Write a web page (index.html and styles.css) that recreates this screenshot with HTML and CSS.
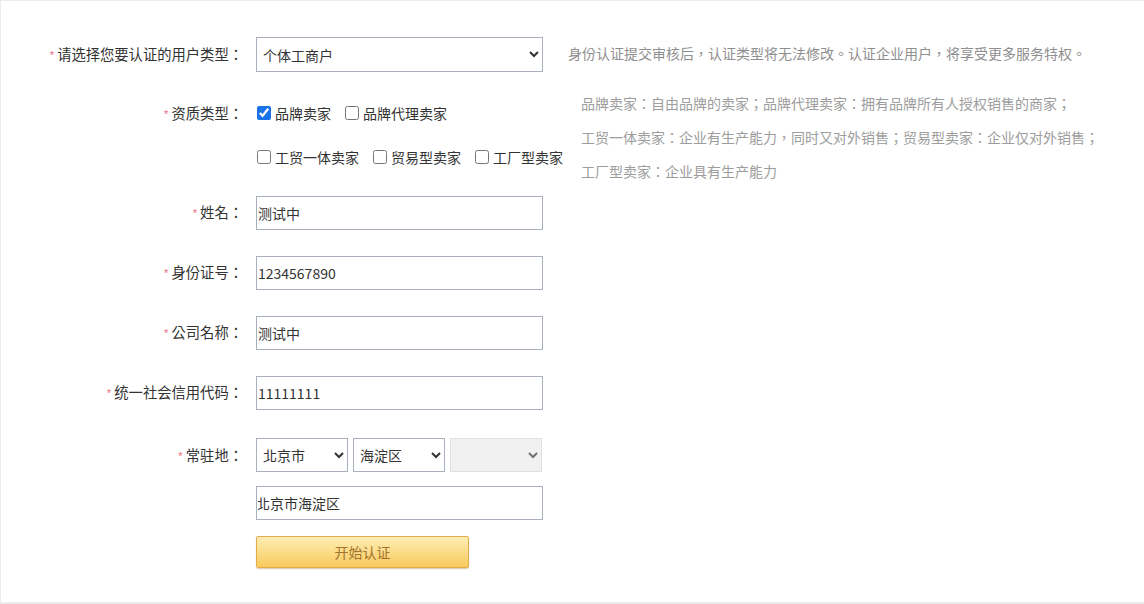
FILE: index.html
```html
<!DOCTYPE html>
<html>
<head>
<meta charset="utf-8">
<title>身份认证</title>
<link rel="stylesheet" href="styles.css">
</head>
<body>
<div class="page">
  <form class="form">
    <div class="row row-type">
      <label class="label"><span class="req">*</span> 请选择您要认证的用户类型：</label>
      <select class="select select-wide">
        <option>个体工商户</option>
        <option>企业</option>
      </select>
      <p class="note">身份认证提交审核后，认证类型将无法修改。认证企业用户，将享受更多服务特权。</p>
    </div>

    <div class="row row-quals">
      <label class="label label-quals"><span class="req">*</span> 资质类型：</label>
      <div class="checks">
        <div class="check-line">
          <label class="check"><input type="checkbox" checked>品牌卖家</label>
          <label class="check"><input type="checkbox">品牌代理卖家</label>
        </div>
        <div class="check-line">
          <label class="check"><input type="checkbox">工贸一体卖家</label>
          <label class="check"><input type="checkbox">贸易型卖家</label>
          <label class="check"><input type="checkbox">工厂型卖家</label>
        </div>
      </div>
      <div class="hints">
        <p>品牌卖家：自由品牌的卖家；品牌代理卖家：拥有品牌所有人授权销售的商家；</p>
        <p>工贸一体卖家：企业有生产能力，同时又对外销售；贸易型卖家：企业仅对外销售；</p>
        <p>工厂型卖家：企业具有生产能力</p>
      </div>
    </div>

    <div class="row">
      <label class="label"><span class="req">*</span> 姓名：</label>
      <input class="text" type="text" value="测试中">
    </div>
    <div class="row">
      <label class="label"><span class="req">*</span> 身份证号：</label>
      <input class="text" type="text" value="1234567890">
    </div>
    <div class="row">
      <label class="label"><span class="req">*</span> 公司名称：</label>
      <input class="text" type="text" value="测试中">
    </div>
    <div class="row">
      <label class="label"><span class="req">*</span> 统一社会信用代码：</label>
      <input class="text" type="text" value="11111111">
    </div>

    <div class="row row-addr">
      <label class="label"><span class="req">*</span> 常驻地：</label>
      <div class="addr">
        <div class="addr-selects">
          <select class="select select-small"><option>北京市</option></select>
          <select class="select select-small"><option>海淀区</option></select>
          <select class="select select-small" disabled><option></option></select>
        </div>
        <input class="text text-addr" type="text" value="北京市海淀区">
        <button class="btn" type="button">开始认证</button>
      </div>
    </div>
  </form>
</div>
</body>
</html>
```

FILE: styles.css
```css
html, body {
  margin: 0;
  padding: 0;
  background: #ffffff;
}

body {
  font-family: "Noto Sans CJK TC", "Noto Sans CJK SC", "Noto Sans", "Liberation Sans", sans-serif;
  font-size: 14px;
  color: #333333;
}

.page {
  box-sizing: border-box;
  height: 604px;
  border-top: 1px solid #ececec;
  border-left: 1px solid #ececec;
  border-bottom: 2px solid #ececec;
}

.form {
  margin: 0;
  padding-top: 36px;
}

.row {
  display: flex;
  align-items: center;
  margin-bottom: 26px;
}

.label {
  width: 242px;
  flex: none;
  text-align: right;
  font-size: 14.3px;
  line-height: 20px;
  color: #333333;
  margin-right: 13px;
  white-space: nowrap;
}

.req {
  color: #ec6a7e;
  font-size: 11px;
  font-family: "Liberation Sans", sans-serif;
  position: relative;
  top: -1px;
}

.select {
  box-sizing: border-box;
  height: 35px;
  border: 1px solid #a7b0bb;
  border-radius: 0;
  background: #ffffff;
  color: #333333;
  font-family: inherit;
  font-size: 14px;
  padding: 0 2px;
  margin: 0;
}

.select-wide {
  width: 287px;
}

.note {
  margin: 0 0 0 25px;
  color: #8f8f8f;
  font-size: 14px;
  line-height: 20px;
  white-space: nowrap;
  position: relative;
  top: -2px;
}

/* qualification row */
.row-quals {
  align-items: flex-start;
  margin-top: -12px;
  margin-bottom: 8px;
}

.label-quals {
  margin-top: 17px;
}

.checks {
  width: 313px;
  flex: none;
  padding-top: 10px;
}

.check-line {
  display: flex;
  align-items: center;
  height: 34px;
  white-space: nowrap;
}

.check-line + .check-line {
  margin-top: 10px;
}

.check {
  display: flex;
  align-items: center;
  margin-right: 13px;
  font-size: 14px;
  color: #333333;
}

.check input {
  width: 14px;
  height: 14px;
  margin: 0 4px 0 1px;
  accent-color: #1a73e8;
}

.hints {
  margin-left: 12px;
}

.hints p {
  margin: 0;
  line-height: 34px;
  color: #9d9d9d;
  font-size: 14px;
  white-space: nowrap;
}

/* text inputs */
.text {
  box-sizing: border-box;
  width: 287px;
  height: 34px;
  border: 1px solid #a7b0bb;
  border-radius: 0;
  padding: 0 1px;
  margin: 0;
  font-family: inherit;
  font-size: 14px;
  color: #333333;
  background: #ffffff;
}

/* address */
.row-addr {
  align-items: flex-start;
  padding-top: 2px;
}

.row-addr .label {
  margin-top: 7px;
}

.addr {
  display: flex;
  flex-direction: column;
}

.addr-selects {
  display: flex;
  gap: 5px;
}

.select-small {
  width: 92px;
  height: 34px;
}

.select-small:disabled {
  background: #ececec;
  border-color: #d2d2d2;
}

.text-addr {
  margin-top: 14px;
  text-indent: -2px;
}

.btn {
  box-sizing: border-box;
  margin-top: 16px;
  width: 213px;
  height: 32px;
  border: 1px solid #e2ac48;
  border-radius: 2px;
  background: linear-gradient(#fdeeb4, #f8ca5c);
  box-shadow: 0 1px 1px rgba(160, 110, 30, 0.35);
  color: #a4712e;
  font-family: inherit;
  font-size: 14px;
  cursor: pointer;
  padding: 0;
}
```
